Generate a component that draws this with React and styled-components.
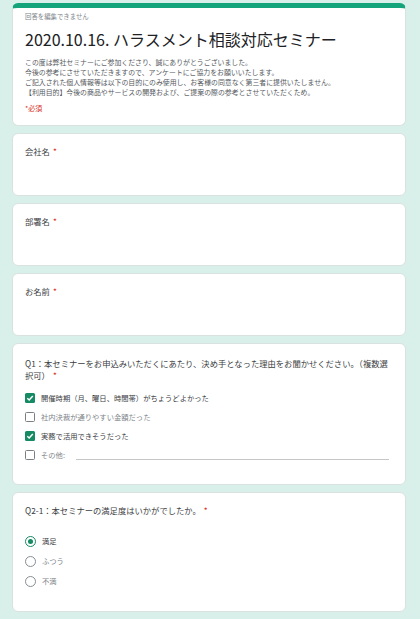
import React from "react";
import styled, { css, createGlobalStyle } from "styled-components";

const GlobalStyle = createGlobalStyle`
  html, body {
    margin: 0;
    padding: 0;
    background: #d8efea;
    font-family: "Noto Sans CJK JP", "Noto Sans", sans-serif;
  }
`;

const Page = styled.div`
  display: flex;
  flex-direction: column;
  gap: 7px;
  padding: 3px 14px 20px 12px;
`;

const Card = styled.section`
  box-sizing: border-box;
  height: ${(p) => p.h}px;
  background: #fff;
  border: 1px solid #d9e2df;
  border-radius: 6px;
  padding: ${(p) => p.pt ?? 11}px 12px 0 12px;
  overflow: hidden;

  ${(p) =>
    p.accent &&
    css`
      border-top: 5px solid #13a47b;
    `}
`;

const Notice = styled.div`
  font-size: 6.4px;
  line-height: 9px;
  color: #80868b;
  margin-top: 4px;
`;

const Title = styled.h1`
  margin: 7px 0 0;
  font-size: 16px;
  line-height: 22px;
  font-weight: 400;
  color: #202124;
  white-space: nowrap;
`;

const Desc = styled.div`
  margin-top: 7px;
  display: flex;
  flex-direction: column;
  font-size: 6.9px;
  color: #55595e;
  white-space: nowrap;
`;

const DescLine = styled.div`
  height: 10px;
  line-height: 10px;
`;

const Required = styled.div`
  margin-top: 6px;
  font-size: 7px;
  line-height: 10px;
  color: #d93025;
`;

const Label = styled.div`
  font-size: 8.3px;
  line-height: 12px;
  color: #3c4043;
`;

const Star = styled.span`
  color: #d93025;
  padding-left: 3px;
`;

const Options = styled.div`
  display: flex;
  flex-direction: column;
  margin-top: ${(p) => p.mt}px;
`;

const Option = styled.div`
  display: flex;
  align-items: center;
  gap: 6px;
  height: ${(p) => p.rowH}px;
  font-size: 7.3px;
  color: ${(p) => (p.on ? "#3c4043" : "#80868b")};
`;

const Box = styled.span`
  box-sizing: border-box;
  width: 10px;
  height: 10px;
  flex: none;
  border-radius: 1.5px;
  display: flex;
  align-items: center;
  justify-content: center;
  ${(p) =>
    p.on
      ? css`
          background: #158a63;
        `
      : css`
          border: 1.3px solid #7a7f84;
        `}
`;

const Radio = styled.span`
  box-sizing: border-box;
  width: 11px;
  height: 11px;
  flex: none;
  border-radius: 50%;
  display: flex;
  align-items: center;
  justify-content: center;
  border: 1.3px solid ${(p) => (p.on ? "#158a63" : "#888d92")};

  ${(p) =>
    p.on &&
    css`
      &::after {
        content: "";
        width: 5px;
        height: 5px;
        border-radius: 50%;
        background: #158a63;
      }
    `}
`;

const OtherLine = styled.span`
  flex: 1;
  align-self: flex-end;
  margin: 0 4px 4px 5px;
  border-bottom: 1px solid #c4c7c5;
`;

const Check = () => (
  <svg width="8" height="8" viewBox="0 0 8 8">
    <polyline
      points="1.3,4.2 3.2,6 6.8,2"
      fill="none"
      stroke="#fff"
      strokeWidth="1.5"
    />
  </svg>
);

const intro = [
  "この度は弊社セミナーにご参加くださり、誠にありがとうございました。",
  "今後の参考にさせていただきますので、アンケートにご協力をお願いいたします。",
  "ご記入された個人情報等は以下の目的にのみ使用し、お客様の同意なく第三者に提供いたしません。",
  "【利用目的】今後の商品やサービスの開発および、ご提案の際の参考とさせていただくため。",
];

const reasons = [
  { text: "開催時期（月、曜日、時間帯）がちょうどよかった", on: true },
  { text: "社内決裁が通りやすい金額だった", on: false },
  { text: "実務で活用できそうだった", on: true },
];

const grades = [
  { text: "満足", on: true },
  { text: "ふつう", on: false },
  { text: "不満", on: false },
];

export default function App() {
  return (
    <>
      <GlobalStyle />
      <Page>
        <Card accent h={123} pt={0}>
          <Notice>回答を編集できません</Notice>
          <Title>2020.10.16. ハラスメント相談対応セミナー</Title>
          <Desc>
            {intro.map((line) => (
              <DescLine key={line}>{line}</DescLine>
            ))}
          </Desc>
          <Required>*必須</Required>
        </Card>

        {["会社名", "部署名", "お名前"].map((f) => (
          <Card key={f} h={63}>
            <Label>
              {f}
              <Star>*</Star>
            </Label>
          </Card>
        ))}

        <Card h={142} pt={13}>
          <Label>
            Q1：本セミナーをお申込みいただくにあたり、決め手となった理由をお聞かせください。（複数選択可）
            <Star>*</Star>
          </Label>
          <Options mt={7}>
            {reasons.map((r) => (
              <Option key={r.text} on={r.on} rowH={19}>
                <Box on={r.on}>{r.on && <Check />}</Box>
                {r.text}
              </Option>
            ))}
            <Option rowH={19}>
              <Box />
              その他:
              <OtherLine />
            </Option>
          </Options>
        </Card>

        <Card h={120}>
          <Label>
            Q2-1：本セミナーの満足度はいかがでしたか。
            <Star>*</Star>
          </Label>
          <Options mt={15}>
            {grades.map((g) => (
              <Option key={g.text} on={g.on} rowH={20}>
                <Radio on={g.on} />
                {g.text}
              </Option>
            ))}
          </Options>
        </Card>
      </Page>
    </>
  );
}
